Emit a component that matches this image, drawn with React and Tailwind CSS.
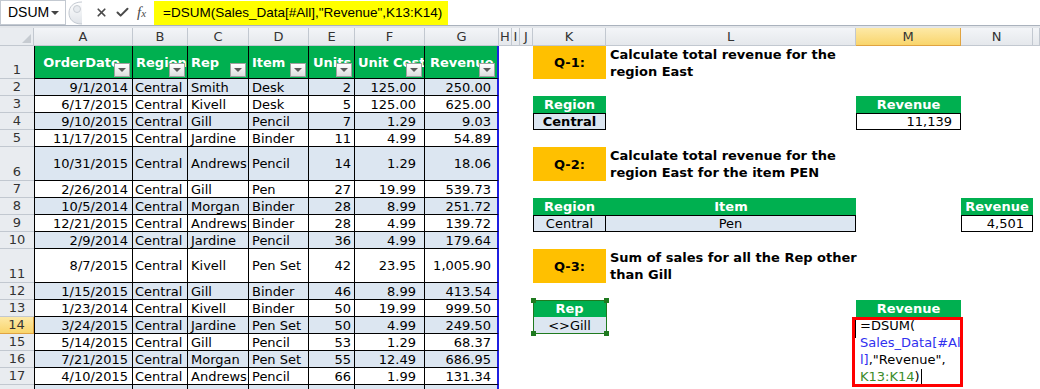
import React from 'react';
import { X, Check } from 'lucide-react';

const LETTERS = ['', 'A', 'B', 'C', 'D', 'E', 'F', 'G', 'H', 'I', 'J', 'K', 'L', 'M', 'N', ''];

const HEADERS = ['OrderDate', 'Region', 'Rep', 'Item', 'Units', 'Unit Cost', 'Revenue'];

const DATA = [
  ['9/1/2014', 'Central', 'Smith', 'Desk', '2', '125.00', '250.00'],
  ['6/17/2015', 'Central', 'Kivell', 'Desk', '5', '125.00', '625.00'],
  ['9/10/2015', 'Central', 'Gill', 'Pencil', '7', '1.29', '9.03'],
  ['11/17/2015', 'Central', 'Jardine', 'Binder', '11', '4.99', '54.89'],
  ['10/31/2015', 'Central', 'Andrews', 'Pencil', '14', '1.29', '18.06'],
  ['2/26/2014', 'Central', 'Gill', 'Pen', '27', '19.99', '539.73'],
  ['10/5/2014', 'Central', 'Morgan', 'Binder', '28', '8.99', '251.72'],
  ['12/21/2015', 'Central', 'Andrews', 'Binder', '28', '4.99', '139.72'],
  ['2/9/2014', 'Central', 'Jardine', 'Pencil', '36', '4.99', '179.64'],
  ['8/7/2015', 'Central', 'Kivell', 'Pen Set', '42', '23.95', '1,005.90'],
  ['1/15/2015', 'Central', 'Gill', 'Binder', '46', '8.99', '413.54'],
  ['1/23/2014', 'Central', 'Kivell', 'Binder', '50', '19.99', '999.50'],
  ['3/24/2015', 'Central', 'Jardine', 'Pen Set', '50', '4.99', '249.50'],
  ['5/14/2015', 'Central', 'Gill', 'Pencil', '53', '1.29', '68.37'],
  ['7/21/2015', 'Central', 'Morgan', 'Pen Set', '55', '12.49', '686.95'],
  ['4/10/2015', 'Central', 'Andrews', 'Pencil', '66', '1.99', '131.34'],
  ['', '', '', '', '', '', ''],
];

const DATA_ALIGN = [
  'justify-end pr-[4px]',
  'justify-start pl-[2px]',
  'justify-start pl-[3px]',
  'justify-start pl-[3px]',
  'justify-end pr-[3px]',
  'justify-end pr-[8px]',
  'justify-end pr-[6px]',
];

const HEAD_ALIGN = [
  'justify-center pr-[4px]',
  'justify-start pl-[3px]',
  'justify-start pl-[3px]',
  'justify-start pl-[3px]',
  'justify-start pl-[4px]',
  'justify-start pl-[3px]',
  'justify-start pl-[5px]',
];

function FilterButton() {
  return (
    <span className="absolute right-[2px] bottom-[1px] flex h-[14px] w-[16px] items-center justify-center border border-[#a0a0a0] bg-gradient-to-b from-white to-[#dedede]">
      <svg width="8" height="4" viewBox="0 0 8 4">
        <path d="M0 0h8L4 4z" fill="#5a5a5a" />
      </svg>
    </span>
  );
}

function QBox({ label }) {
  return (
    <div className="flex h-full items-center justify-center bg-[#ffc000] font-bold">{label}</div>
  );
}

function QText({ lines }) {
  return (
    <div className="flex h-full flex-col justify-center whitespace-nowrap pl-[4px] font-bold leading-[17px]">
      {lines.map((l) => (
        <span key={l}>{l}</span>
      ))}
    </div>
  );
}

function GreenHead({ children }) {
  return (
    <div className="flex h-full items-center justify-center bg-[#00b050] font-bold text-white">{children}</div>
  );
}

// content of the question area, keyed by column letter + sheet row
const SIDE = {
  K1: <QBox label="Q-1:" />,
  L1: <QText lines={['Calculate total revenue for the', 'region East']} />,
  K3: <GreenHead>Region</GreenHead>,
  M3: <GreenHead>Revenue</GreenHead>,
  K4: (
    <div className="flex h-full items-center justify-center border border-black bg-[#dce6f1] font-bold">Central</div>
  ),
  M4: <div className="flex h-full items-center justify-end border border-black bg-white pr-[8px]">11,139</div>,
  K6: <QBox label="Q-2:" />,
  L6: <QText lines={['Calculate total revenue for the', 'region East for the item PEN']} />,
  K8: <GreenHead>Region</GreenHead>,
  L8: <GreenHead>Item</GreenHead>,
  N8: <GreenHead>Revenue</GreenHead>,
  K9: <div className="flex h-full items-center justify-center border border-black bg-[#dce6f1]">Central</div>,
  L9: <div className="flex h-full items-center justify-center border-y border-r border-black bg-[#dce6f1]">Pen</div>,
  N9: <div className="flex h-full items-center justify-end border border-black bg-white pr-[8px]">4,501</div>,
  K11: <QBox label="Q-3:" />,
  L11: <QText lines={['Sum of sales for all the Rep other', 'than Gill']} />,
  K13: (
    <>
      <GreenHead>Rep</GreenHead>
      {/* selection K13:K14 */}
      <div className="pointer-events-none absolute left-0 top-0 z-10 h-[34px] w-[74px] border border-[#1f7a1f]">
        <span className="absolute -left-[3px] -top-[3px] h-[5px] w-[5px] bg-[#1f7a1f]" />
        <span className="absolute -right-[3px] -top-[3px] h-[5px] w-[5px] bg-[#1f7a1f]" />
        <span className="absolute -left-[3px] -bottom-[3px] h-[5px] w-[5px] bg-[#1f7a1f]" />
        <span className="absolute -right-[3px] -bottom-[3px] h-[5px] w-[5px] bg-[#1f7a1f]" />
      </div>
    </>
  ),
  M13: <GreenHead>Revenue</GreenHead>,
  K14: <div className="flex h-full items-center justify-center bg-[#dce6f1]">&lt;&gt;Gill</div>,
  M14: (
    <div className="absolute -left-[4px] top-0 z-20 h-[70px] w-[111px] border-[3px] border-[#ff0000] bg-white">
      <span className="absolute left-0 top-0 h-[18px] w-px bg-black" />
      <div className="absolute -top-[3px] left-[5px] whitespace-nowrap leading-[17px]">
        <div>=DSUM(</div>
        <div className="text-[#3030f0]">Sales_Data[#Al</div>
        <div>
          <span className="text-[#3030f0]">l]</span>,"Revenue",
        </div>
        <div className="flex items-center">
          <span className="text-[#3b8c2a]">K13:K14</span>)
          <span className="ml-[1px] inline-block h-[15px] w-px bg-black" />
        </div>
      </div>
    </div>
  ),
};

function renderCell(r, c) {
  const key = `${r}-${c}`;
  const base = 'relative flex items-center text-[13px] leading-none';

  // top-left corner
  if (r === 0 && c === 0) {
    return (
      <div key={key} className="relative border-r border-b border-[#c2c8d0] bg-[#e9ecf0]">
        <svg className="absolute bottom-[2px] right-[2px]" width="9" height="9" viewBox="0 0 9 9">
          <path d="M9 0V9H0z" fill="#c6cbd1" />
        </svg>
      </div>
    );
  }

  // column letters
  if (r === 0) {
    const active = c === 13;
    return (
      <div
        key={key}
        className={`${base} justify-center border-r border-b text-[#333] ${
          active
            ? 'border-[#e0a341] bg-gradient-to-b from-[#fde9a6] to-[#f9d56b]'
            : 'border-[#c2c8d0] bg-gradient-to-b from-[#f3f5f8] to-[#e5e8ec]'
        }`}
      >
        {LETTERS[c]}
      </div>
    );
  }

  // row numbers (last row is cut by the window, its number sits below the edge)
  if (c === 0) {
    const active = r === 14;
    return (
      <div
        key={key}
        className={`${base} items-end justify-center border-b pb-[2px] text-[#333] ${
          active
            ? 'border-r border-[#e0a341] bg-gradient-to-b from-[#fde9a6] to-[#f9d56b]'
            : 'border-[#c2c8d0] bg-[#e9ecf0]'
        }`}
      >
        {r < 18 ? r : ''}
      </div>
    );
  }

  // data table A:G
  if (c <= 7) {
    const i = c - 1;
    const edge = `border-b border-black ${c === 1 ? 'border-l' : ''} ${
      c === 7 ? 'border-r-2 border-r-[#1f1fe0]' : 'border-r'
    }`;
    if (r === 1) {
      return (
        <div
          key={key}
          className={`${base} ${edge} ${HEAD_ALIGN[i]} overflow-hidden whitespace-nowrap bg-[#00b050] font-bold text-white`}
        >
          {HEADERS[i]}
          <FilterButton />
        </div>
      );
    }
    const row = DATA[r - 2];
    return (
      <div
        key={key}
        className={`${base} ${edge} ${DATA_ALIGN[i]} whitespace-nowrap ${r % 2 === 0 ? 'bg-[#dce6f1]' : 'bg-white'}`}
      >
        {row[i]}
      </div>
    );
  }

  const content = SIDE[`${LETTERS[c]}${r}`];
  return (
    <div key={key} className="relative text-[13px] leading-none">
      {content}
    </div>
  );
}

export default function App() {
  const cells = [];
  for (let r = 0; r <= 18; r++) {
    for (let c = 0; c <= 15; c++) {
      cells.push(renderCell(r, c));
    }
  }

  return (
    <div className="h-[389px] w-[1040px] overflow-hidden bg-white font-['DejaVu_Sans',Verdana,sans-serif] text-black">
      {/* formula bar */}
      <div className="flex h-[26px] border-b border-[#aab2bd] bg-white font-['Liberation_Sans',Arial,sans-serif] text-[13px]">
        <div className="flex w-[66px] items-center justify-between border border-[#c3c9d1] pl-[7px] pr-[6px] text-[14px]">
          <span>DSUM</span>
          <svg width="8" height="4" viewBox="0 0 8 4">
            <path d="M0 0h8L4 4z" fill="#444" />
          </svg>
        </div>
        <div className="flex w-[18px] items-center justify-center">
          <svg width="16" height="24" viewBox="0 0 16 24">
            <defs>
              <linearGradient id="grip" x1="0" y1="0" x2="0" y2="1">
                <stop offset="0" stopColor="#ffffff" />
                <stop offset="1" stopColor="#dfe3e8" />
              </linearGradient>
            </defs>
            <path d="M15 1C6 1 2 6 2 12s4 11 13 11" fill="url(#grip)" stroke="#c3c9d1" />
            <circle cx="10" cy="8" r="3.5" fill="#e8ebef" stroke="#c8cdd3" />
          </svg>
        </div>
        <div className="flex w-[70px] items-center gap-[7px] pl-[11px] text-[#4a4a4a]">
          <X size={13} strokeWidth={3.2} />
          <Check size={15} strokeWidth={3.2} />
          <span className="font-['Liberation_Serif',serif] text-[15px] italic">
            f<span className="text-[11px]">x</span>
          </span>
        </div>
        <div className="mt-[1px] flex h-[24px] w-[294px] items-center bg-[#ffff00] pl-[9px] text-[13.5px]">
          =DSUM(Sales_Data[#All],"Revenue",K13:K14)
        </div>
      </div>
      <div className="h-[2px] bg-[#e3e6ea]" />

      {/* sheet */}
      <div className="grid grid-cols-[34px_99px_55px_61px_60px_46px_70px_74px_13px_8px_13px_73px_250px_105px_72px_1fr] grid-rows-[18px_33px_17px_17px_17px_17px_34px_17px_17px_17px_17px_34px_17px_17px_17px_17px_17px_17px_17px]">
        {cells}
      </div>
    </div>
  );
}
